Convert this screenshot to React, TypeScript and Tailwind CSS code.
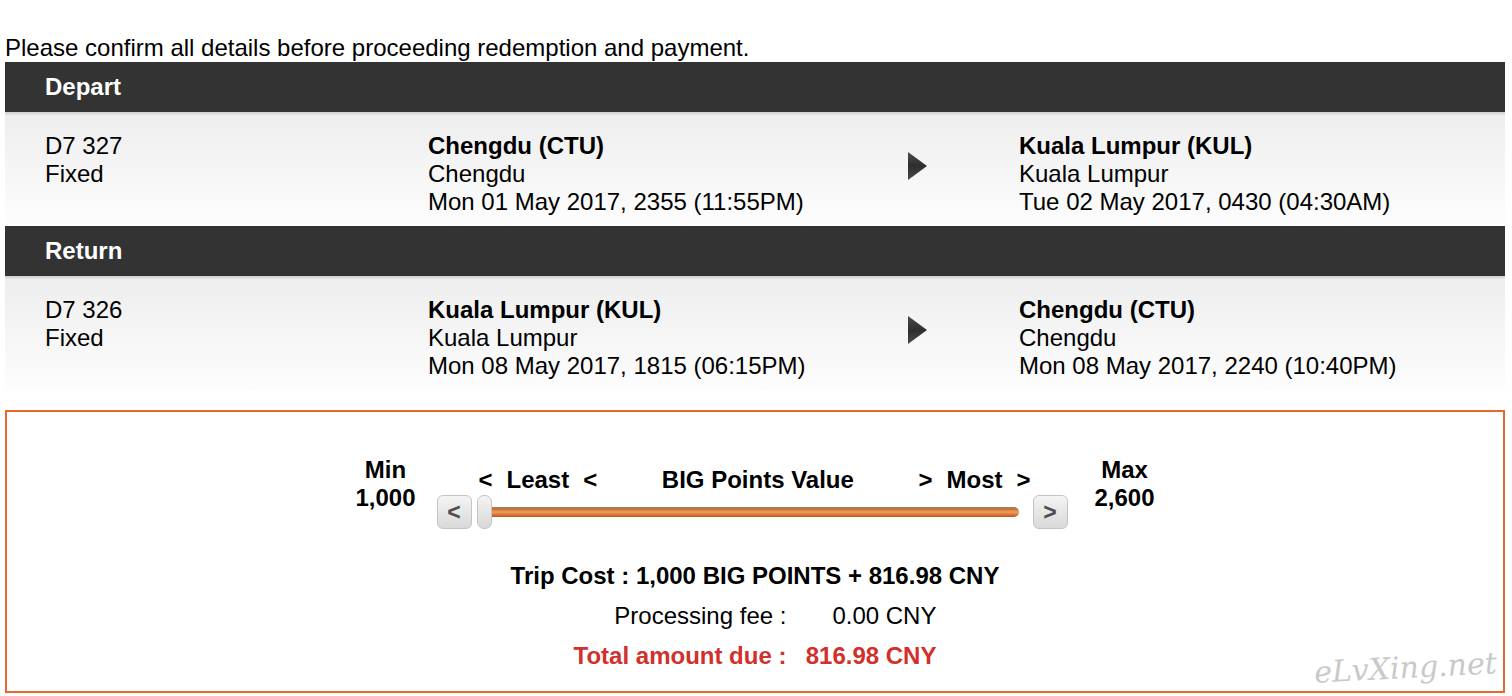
import React from "react";

type Leg = {
  flight: string;
  fromCity: string;
  fromSub: string;
  fromTime: string;
  toCity: string;
  toSub: string;
  toTime: string;
};

function Arrow() {
  return (
    <svg width="19" height="28" viewBox="0 0 19 28">
      <defs>
        <linearGradient id="ag" x1="0" y1="0" x2="0" y2="1">
          <stop offset="0" stopColor="#4a4a4a" />
          <stop offset="0.5" stopColor="#2e2e2e" />
          <stop offset="1" stopColor="#4a4a4a" />
        </linearGradient>
      </defs>
      <path d="M0 0 L19 14 L0 28 Z" fill="url(#ag)" />
    </svg>
  );
}

function Section({ title, leg }: { title: string; leg: Leg }) {
  return (
    <div>
      <div className="h-[50px] bg-[#333333] flex items-center pl-[40px] text-white font-bold text-[24px]">
        {title}
      </div>
      <div className="h-[3px] bg-linear-to-b from-[#cfcfcf] to-[#e6e6e6]" />
      <div className="h-[111px] bg-linear-to-b from-[#eeeeee] to-[#fdfdfd] pt-[17px] pl-[40px] flex text-[24px] leading-[28px] text-black">
        <div className="w-[383px]">
          <div>{leg.flight}</div>
          <div>Fixed</div>
        </div>
        <div className="w-[480px]">
          <div className="font-bold">{leg.fromCity}</div>
          <div>{leg.fromSub}</div>
          <div>{leg.fromTime}</div>
        </div>
        <div className="w-[111px] pt-[20px]">
          <Arrow />
        </div>
        <div>
          <div className="font-bold">{leg.toCity}</div>
          <div>{leg.toSub}</div>
          <div>{leg.toTime}</div>
        </div>
      </div>
    </div>
  );
}

function SBtn({ children }: { children: React.ReactNode }) {
  return (
    <div className="w-[35px] h-[34px] rounded-[6px] border border-[#c4c4c4] bg-linear-to-b from-[#f4f4f4] to-[#d9d9d9] flex items-center justify-center text-[#4e4e4e] font-bold text-[23px] leading-none shrink-0">
      {children}
    </div>
  );
}

export default function App() {
  const depart: Leg = {
    flight: "D7 327",
    fromCity: "Chengdu (CTU)",
    fromSub: "Chengdu",
    fromTime: "Mon 01 May 2017, 2355 (11:55PM)",
    toCity: "Kuala Lumpur (KUL)",
    toSub: "Kuala Lumpur",
    toTime: "Tue 02 May 2017, 0430 (04:30AM)",
  };
  const ret: Leg = {
    flight: "D7 326",
    fromCity: "Kuala Lumpur (KUL)",
    fromSub: "Kuala Lumpur",
    fromTime: "Mon 08 May 2017, 1815 (06:15PM)",
    toCity: "Chengdu (CTU)",
    toSub: "Chengdu",
    toTime: "Mon 08 May 2017, 2240 (10:40PM)",
  };

  return (
    <div className="w-[1512px] h-[696px] overflow-hidden bg-white pl-[5px] pr-[7px] pt-[34px] font-['Liberation_Sans',Arial,sans-serif] text-black">
      <div className="text-[24px] leading-[28px]">
        Please confirm all details before proceeding redemption and payment.
      </div>
      <Section title="Depart" leg={depart} />
      <Section title="Return" leg={ret} />

      <div className="mt-[20px] h-[283px] border-2 border-[#e9672c] relative pt-[44px]">
        <div className="flex justify-center items-start">
          <div className="w-[60px] text-center font-bold text-[24px] leading-[28px]">
            <div>Min</div>
            <div>1,000</div>
          </div>
          <div className="ml-[21px] mt-[10px] w-[631px]">
            <div className="flex justify-between pl-[42px] pr-[37px] font-bold text-[24px] leading-[28px] h-[28px]">
              <span className="flex gap-[14px]">
                <span>&lt;</span>
                <span>Least</span>
                <span>&lt;</span>
              </span>
              <span>BIG Points Value</span>
              <span className="flex gap-[14px]">
                <span>&gt;</span>
                <span>Most</span>
                <span>&gt;</span>
              </span>
            </div>
            <div className="mt-[1px] h-[34px] flex items-center">
              <SBtn>&lt;</SBtn>
              <div className="ml-[5px] w-[15px] h-[34px] rounded-[7px] border border-[#c4c4c4] bg-linear-to-b from-[#f4f4f4] to-[#d8d8d8] relative z-10 shrink-0" />
              <div className="-ml-[1px] w-[528px] h-[10px] rounded-r-full bg-[linear-gradient(to_bottom,#9d8068_0%,#c9702f_22%,#eda061_50%,#d9732f_78%,#b55a1f_100%)] shrink-0" />
              <div className="ml-[14px]">
                <SBtn>&gt;</SBtn>
              </div>
            </div>
          </div>
          <div className="ml-[27px] w-[60px] text-center font-bold text-[24px] leading-[28px]">
            <div>Max</div>
            <div>2,600</div>
          </div>
        </div>

        <div className="mt-[33px] text-center font-bold text-[24px] leading-[28px]">
          Trip Cost : 1,000 BIG POINTS + 816.98 CNY
        </div>

        <div className="mt-[6px] mx-auto w-fit grid grid-cols-[auto_150px] text-[24px] leading-[40px]">
          <div className="text-right">Processing fee :</div>
          <div className="text-right">0.00 CNY</div>
          <div className="text-right font-bold text-[#d1302c]">Total amount due :</div>
          <div className="text-right font-bold text-[#d1302c]">816.98 CNY</div>
        </div>

        <div className="absolute right-[6px] bottom-[8px] italic text-[#c9c9c9] text-[30px] leading-none font-['DejaVu_Serif',serif] -rotate-3">
          eLvXing.net
        </div>
      </div>
    </div>
  );
}
